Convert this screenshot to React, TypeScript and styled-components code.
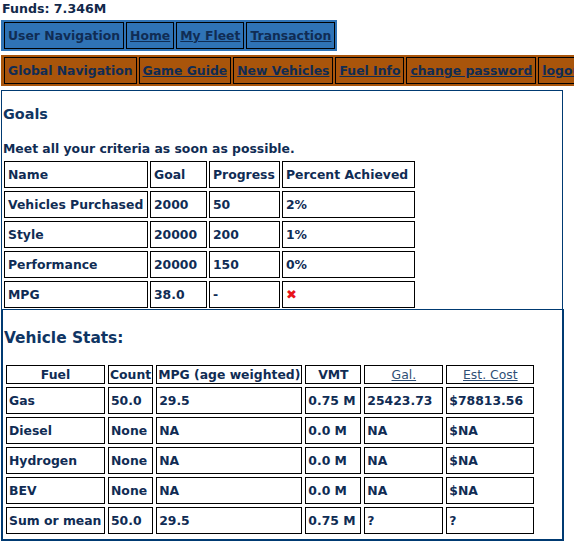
import styled, { createGlobalStyle } from 'styled-components';

const GlobalStyle = createGlobalStyle`
  html, body {
    overflow: hidden;
  }

  body {
    margin: 0;
    padding: 1px;
    background: #fff;
    color: #102c54;
    font-family: 'DejaVu Sans', Verdana, sans-serif;
    font-size: 12.4px;
    font-weight: bold;
    line-height: 15px;
  }
`;

const Page = styled.div`
  width: 563px;
`;

const Funds = styled.div`
  height: 17px;
  margin: 0 0 2px 1px;
  line-height: 16px;
  font-size: 12.6px;
  color: #12284a;
`;

const NavTable = styled.table<{ $bg: string }>`
  border-spacing: 2px;
  padding-left: 1px;
  background: ${(p) => p.$bg};
  white-space: nowrap;
  margin-bottom: 4px;
`;

const NavCell = styled.td`
  height: 17px;
  padding: 4px 3px;
  line-height: 17px;
  border: 1px solid #000;
`;

const NavLink = styled.a`
  color: #102c54;
  text-decoration: underline;
`;

const Box = styled.div<{ $thick?: boolean }>`
  border: ${(p) => (p.$thick ? '2px' : '1px')} solid #003a72;
  border-top-width: 1px;
  border-bottom-width: ${(p) => (p.$thick ? '2px' : '0')};
  padding-bottom: ${(p) => (p.$thick ? '2px' : '0')};
  width: ${(p) => (p.$thick ? '563px' : '562px')};
  box-sizing: border-box;
`;

const Heading = styled.h2<{ $size: number; $top: number; $bottom: number }>`
  margin: ${(p) => p.$top}px 0 ${(p) => p.$bottom}px 1px;
  font-size: ${(p) => p.$size}px;
  line-height: ${(p) => Math.round(p.$size * 1.18)}px;
  color: #0f3563;
`;

const Intro = styled.p`
  margin: 0 0 2px 1px;
`;

const DataTable = styled.table<{ $spacing: string; $pull?: number }>`
  border-spacing: ${(p) => p.$spacing};
  margin-bottom: ${(p) => p.$pull ?? 0}px;
`;

const Th = styled.th<{ $w?: number; $align?: string }>`
  border: 1px solid #000;
  padding: ${(p) => (p.$align === 'left' ? '5px 3px' : '1px')};
  text-align: ${(p) => p.$align ?? 'center'};
  white-space: nowrap;
  width: ${(p) => (p.$w ? `${p.$w}px` : 'auto')};
`;

const Td = styled.td<{ $pad?: string }>`
  border: 1px solid #000;
  padding: ${(p) => p.$pad ?? '5px 3px'};
  white-space: nowrap;
`;

const SortLink = styled.a`
  font-weight: normal;
  color: #2f4f75;
  text-decoration: underline;
`;

const Cross = styled.span`
  color: #e8141b;
  font-size: 13px;
`;

const After = styled.div`
  margin: 2px 0 0 20px;
`;

const userNav = ['Home', 'My Fleet', 'Transaction'];
const globalNav = ['Game Guide', 'New Vehicles', 'Fuel Info', 'change password', 'logout'];

const goalColumns: [string, number][] = [
  ['Name', 136],
  ['Goal', 49],
  ['Progress', 63],
  ['Percent Achieved', 125],
];

const goals = [
  ['Vehicles Purchased', '2000', '50', '2%'],
  ['Style', '20000', '200', '1%'],
  ['Performance', '20000', '150', '0%'],
  ['MPG', '38.0', '-', 'x'],
];

const stats = [
  ['Gas', '50.0', '29.5', '0.75 M', '25423.73', '$78813.56'],
  ['Diesel', 'None', 'NA', '0.0 M', 'NA', '$NA'],
  ['Hydrogen', 'None', 'NA', '0.0 M', 'NA', '$NA'],
  ['BEV', 'None', 'NA', '0.0 M', 'NA', '$NA'],
  ['Sum or mean', '50.0', '29.5', '0.75 M', '?', '?'],
];

const App = () => {
  return (
    <Page>
      <GlobalStyle />
      <Funds>Funds: 7.346M</Funds>

      <NavTable $bg="#2f73b6">
        <tbody>
          <tr>
            <NavCell>User Navigation</NavCell>
            {userNav.map((item) => (
              <NavCell key={item}>
                <NavLink href="#">{item}</NavLink>
              </NavCell>
            ))}
          </tr>
        </tbody>
      </NavTable>

      <NavTable $bg="#a9550b">
        <tbody>
          <tr>
            <NavCell>Global Navigation</NavCell>
            {globalNav.map((item) => (
              <NavCell key={item}>
                <NavLink href="#">{item}</NavLink>
              </NavCell>
            ))}
          </tr>
        </tbody>
      </NavTable>

      <Box>
        <Heading $size={14.4} $top={15} $bottom={18}>Goals</Heading>
        <Intro>Meet all your criteria as soon as possible.</Intro>
        <DataTable $spacing="2px 3px" $pull={-2}>
          <tbody>
            <tr>
              {goalColumns.map(([label, width]) => (
                <Th key={label} $align="left" $w={width}>
                  {label}
                </Th>
              ))}
            </tr>
            {goals.map((row) => (
              <tr key={row[0]}>
                {row.map((cell, i) => (
                  <Td key={i}>{cell === 'x' ? <Cross>✖</Cross> : cell}</Td>
                ))}
              </tr>
            ))}
          </tbody>
        </DataTable>
      </Box>

      <Box $thick>
        <Heading $size={15.4} $top={19} $bottom={15}>Vehicle Stats:</Heading>
        <DataTable $spacing="3px">
          <tbody>
            <tr>
              <Th $w={95}>Fuel</Th>
              <Th>Count</Th>
              <Th>MPG (age weighted)</Th>
              <Th $w={52}>VMT</Th>
              <Th $w={75}>
                <SortLink href="#">Gal.</SortLink>
              </Th>
              <Th $w={84}>
                <SortLink href="#">Est. Cost</SortLink>
              </Th>
            </tr>
            {stats.map((row) => (
              <tr key={row[0]}>
                {row.map((cell, i) => (
                  <Td key={i} $pad="5px 2px">
                    {cell}
                  </Td>
                ))}
              </tr>
            ))}
          </tbody>
        </DataTable>
      </Box>

      <After>Total fleet emissions</After>
    </Page>
  );
};

export default App;
